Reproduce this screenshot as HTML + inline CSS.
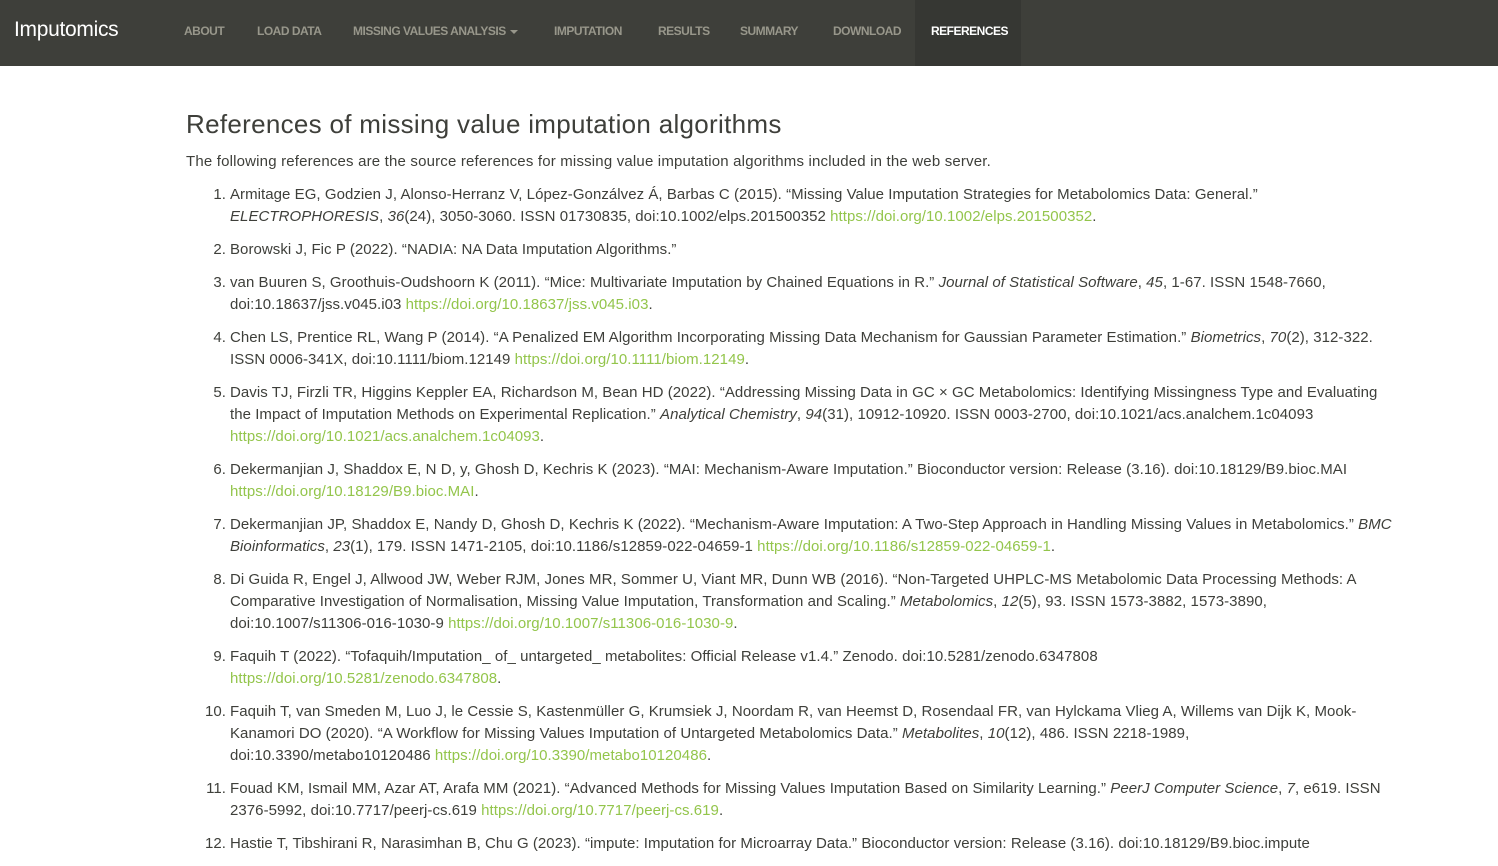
<!DOCTYPE html>
<html><head><meta charset="utf-8"><style>
*{margin:0;padding:0;box-sizing:border-box}
body{width:1498px;height:838px;overflow:hidden;background:#fff;font-family:"Liberation Sans",sans-serif;color:#3e3f3a}
.nav{height:66px;background:#3e3f3a;position:relative}
.brand{position:absolute;left:14px;top:18px;font-size:21px;color:#fff;letter-spacing:-0.3px}
.nav a{position:absolute;top:0;height:66px;line-height:62px;font-size:12px;font-weight:bold;color:#98978b;text-transform:uppercase;letter-spacing:-0.5px;text-decoration:none;white-space:nowrap}
.nav a.act{background:#363733;color:#fff;padding:0 16px}
.caret{display:inline-block;border-left:4px solid transparent;border-right:4px solid transparent;border-top:4px solid #98978b;vertical-align:middle;margin-left:4px}
h1{position:absolute;left:186px;top:109px;font-size:26px;font-weight:normal;letter-spacing:0.3px;white-space:nowrap}
.intro{position:absolute;left:186px;top:153px;font-size:15px;letter-spacing:0.18px;white-space:nowrap}
ol{list-style:none;position:absolute;left:230px;top:184px;font-size:15px;letter-spacing:0.05px;line-height:22px}
li{position:relative;margin-bottom:11px}
li b{position:absolute;right:100%;margin-right:4px;font-weight:normal}
li span{display:block;white-space:nowrap}
.l{color:#93c54b}
</style></head><body>
<div class="nav">
<div class="brand">Imputomics</div>
<a style="left:184px">About</a>
<a style="left:257px">Load Data</a>
<a style="left:353px">Missing Values Analysis<span class="caret"></span></a>
<a style="left:554px">Imputation</a>
<a style="left:658px">Results</a>
<a style="left:740px">Summary</a>
<a style="left:833px">Download</a>
<a class="act" style="left:915px;width:106px">References</a>
</div>
<h1>References of missing value imputation algorithms</h1>
<div class="intro">The following references are the source references for missing value imputation algorithms included in the web server.</div>
<ol>
<li><b>1.</b><span>Armitage EG, Godzien J, Alonso-Herranz V, López-Gonzálvez Á, Barbas C (2015). “Missing Value Imputation Strategies for Metabolomics Data: General.”</span><span><i>ELECTROPHORESIS</i>, <i>36</i>(24), 3050-3060. ISSN 01730835, doi:10.1002/elps.201500352 <span class="l" style="display:inline">https://doi.org/10.1002/elps.201500352</span>.</span></li>
<li><b>2.</b><span>Borowski J, Fic P (2022). “NADIA: NA Data Imputation Algorithms.”</span></li>
<li><b>3.</b><span>van Buuren S, Groothuis-Oudshoorn K (2011). “Mice: Multivariate Imputation by Chained Equations in R.” <i>Journal of Statistical Software</i>, <i>45</i>, 1-67. ISSN 1548-7660,</span><span>doi:10.18637/jss.v045.i03 <span class="l" style="display:inline">https://doi.org/10.18637/jss.v045.i03</span>.</span></li>
<li><b>4.</b><span>Chen LS, Prentice RL, Wang P (2014). “A Penalized EM Algorithm Incorporating Missing Data Mechanism for Gaussian Parameter Estimation.” <i>Biometrics</i>, <i>70</i>(2), 312-322.</span><span>ISSN 0006-341X, doi:10.1111/biom.12149 <span class="l" style="display:inline">https://doi.org/10.1111/biom.12149</span>.</span></li>
<li><b>5.</b><span>Davis TJ, Firzli TR, Higgins Keppler EA, Richardson M, Bean HD (2022). “Addressing Missing Data in GC × GC Metabolomics: Identifying Missingness Type and Evaluating</span><span>the Impact of Imputation Methods on Experimental Replication.” <i>Analytical Chemistry</i>, <i>94</i>(31), 10912-10920. ISSN 0003-2700, doi:10.1021/acs.analchem.1c04093</span><span><span class="l" style="display:inline">https://doi.org/10.1021/acs.analchem.1c04093</span>.</span></li>
<li><b>6.</b><span>Dekermanjian J, Shaddox E, N D, y, Ghosh D, Kechris K (2023). “MAI: Mechanism-Aware Imputation.” Bioconductor version: Release (3.16). doi:10.18129/B9.bioc.MAI</span><span><span class="l" style="display:inline">https://doi.org/10.18129/B9.bioc.MAI</span>.</span></li>
<li><b>7.</b><span>Dekermanjian JP, Shaddox E, Nandy D, Ghosh D, Kechris K (2022). “Mechanism-Aware Imputation: A Two-Step Approach in Handling Missing Values in Metabolomics.” <i>BMC</i></span><span><i>Bioinformatics</i>, <i>23</i>(1), 179. ISSN 1471-2105, doi:10.1186/s12859-022-04659-1 <span class="l" style="display:inline">https://doi.org/10.1186/s12859-022-04659-1</span>.</span></li>
<li><b>8.</b><span>Di Guida R, Engel J, Allwood JW, Weber RJM, Jones MR, Sommer U, Viant MR, Dunn WB (2016). “Non-Targeted UHPLC-MS Metabolomic Data Processing Methods: A</span><span>Comparative Investigation of Normalisation, Missing Value Imputation, Transformation and Scaling.” <i>Metabolomics</i>, <i>12</i>(5), 93. ISSN 1573-3882, 1573-3890,</span><span>doi:10.1007/s11306-016-1030-9 <span class="l" style="display:inline">https://doi.org/10.1007/s11306-016-1030-9</span>.</span></li>
<li><b>9.</b><span>Faquih T (2022). “Tofaquih/Imputation_ of_ untargeted_ metabolites: Official Release v1.4.” Zenodo. doi:10.5281/zenodo.6347808</span><span><span class="l" style="display:inline">https://doi.org/10.5281/zenodo.6347808</span>.</span></li>
<li><b>10.</b><span>Faquih T, van Smeden M, Luo J, le Cessie S, Kastenmüller G, Krumsiek J, Noordam R, van Heemst D, Rosendaal FR, van Hylckama Vlieg A, Willems van Dijk K, Mook-</span><span>Kanamori DO (2020). “A Workflow for Missing Values Imputation of Untargeted Metabolomics Data.” <i>Metabolites</i>, <i>10</i>(12), 486. ISSN 2218-1989,</span><span>doi:10.3390/metabo10120486 <span class="l" style="display:inline">https://doi.org/10.3390/metabo10120486</span>.</span></li>
<li><b>11.</b><span>Fouad KM, Ismail MM, Azar AT, Arafa MM (2021). “Advanced Methods for Missing Values Imputation Based on Similarity Learning.” <i>PeerJ Computer Science</i>, <i>7</i>, e619. ISSN</span><span>2376-5992, doi:10.7717/peerj-cs.619 <span class="l" style="display:inline">https://doi.org/10.7717/peerj-cs.619</span>.</span></li>
<li><b>12.</b><span>Hastie T, Tibshirani R, Narasimhan B, Chu G (2023). “impute: Imputation for Microarray Data.” Bioconductor version: Release (3.16). doi:10.18129/B9.bioc.impute</span></li>
</ol>
</body></html>
